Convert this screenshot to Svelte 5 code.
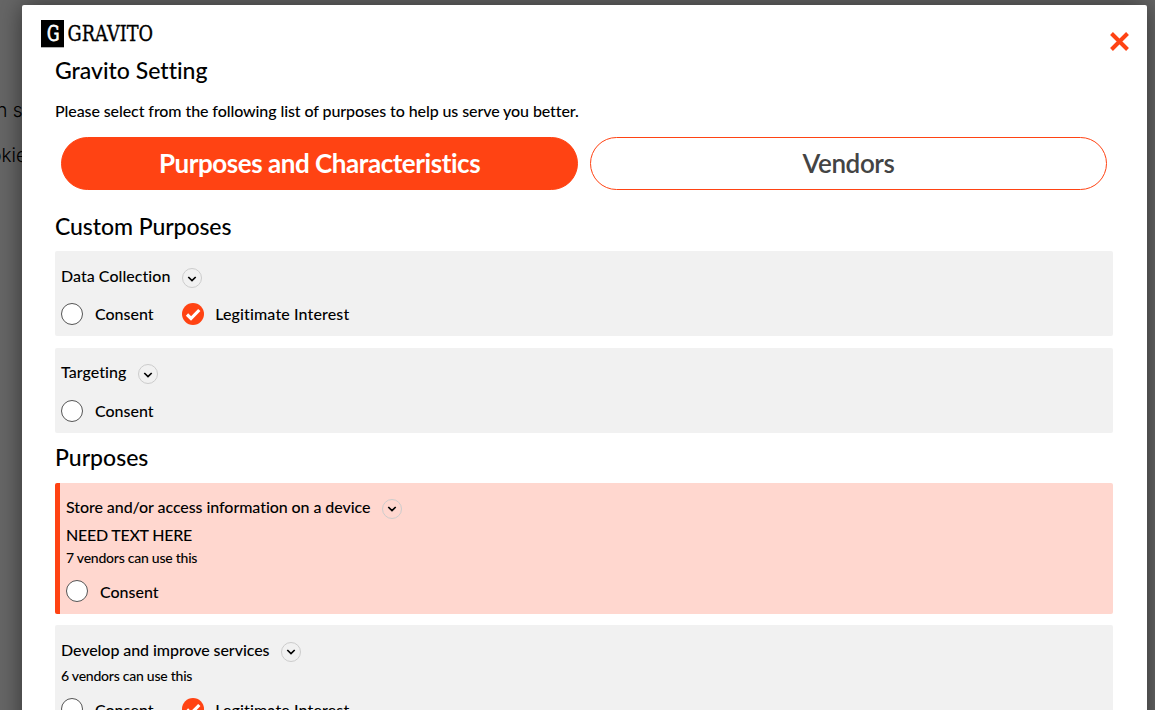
<script>
  const sections = [
    {
      title: 'Custom Purposes',
      items: [
        { name: 'Data Collection', legitimate: true },
        { name: 'Targeting' }
      ]
    },
    {
      title: 'Purposes',
      items: [
        {
          name: 'Store and/or access information on a device',
          note: 'NEED TEXT HERE',
          vendors: 7,
          highlighted: true
        },
        { name: 'Develop and improve services', vendors: 6, legitimate: true }
      ]
    }
  ];
</script>

<div class="page">
  <div class="behind">
    <p class="first">n s</p>
    <p>okie</p>
  </div>
  <main class="dialog">
    <header>
      <svg class="logo" width="114" height="28" viewBox="0 0 114 28" aria-label="Gravito">
        <rect width="23" height="27.3" fill="#000" />
        <text x="6" y="21.3" font-size="22" textLength="12.5" lengthAdjust="spacingAndGlyphs" fill="#fff" stroke="#fff" stroke-width=".8">G</text>
        <text x="26.5" y="21.2" font-size="23" textLength="85.5" lengthAdjust="spacingAndGlyphs" stroke="#000" stroke-width=".4">GRAVITO</text>
      </svg>
      <button class="close" aria-label="Close">
        <svg width="20" height="20" viewBox="0 0 20 20"><path d="M2.5 1.5 18.5 17.5M18.5 1.5 2.5 17.5" stroke="#ff4313" stroke-width="4" /></svg>
      </button>
    </header>
    <div class="content">
      <h1>Gravito Setting</h1>
      <p class="intro">Please select from the following list of purposes to help us serve you better.</p>
      <nav>
        <button class="tab active">Purposes and Characteristics</button>
        <button class="tab">Vendors</button>
      </nav>
      {#each sections as section}
        <section>
          <h2>{section.title}</h2>
          {#each section.items as item}
            <article class:highlighted={item.highlighted}>
              <div class="name">
                <span>{item.name}</span>
                <button class="expand" aria-label="Expand">
                  <svg width="10" height="6" viewBox="0 0 10 6"><path d="M1.3 1 5 4.5 8.7 1" fill="none" stroke="#000" stroke-width="1.7" /></svg>
                </button>
              </div>
              {#if item.note}<p class="note">{item.note}</p>{/if}
              {#if item.vendors}<p class="vendors">{item.vendors} vendors can use this</p>{/if}
              <div class="options">
                <div class="option"><i class="circle"></i><span>Consent</span></div>
                {#if item.legitimate}
                  <div class="option legitimate">
                    <i class="circle checked">
                      <svg width="22" height="22" viewBox="0 0 22 22"><path d="m5 11.5 4 4L17.3 7" fill="none" stroke="#fff" stroke-width="3.2" /></svg>
                    </i>
                    <span>Legitimate Interest</span>
                  </div>
                {/if}
              </div>
            </article>
          {/each}
        </section>
      {/each}
    </div>
  </main>
</div>

<style>
  :global(body) { margin: 0; overflow: hidden; }
  .page { position: relative; box-sizing: border-box; height: 710px; overflow: hidden; background: #666; padding: 5px 8px 0 22px; font-family: Lato, sans-serif; font-weight: 500; font-variant-ligatures: none; color: #000; }
  .behind { position: absolute; left: 0; top: 97px; width: 24px; font: 300 19px/28px Inter, sans-serif; color: #000; display: flex; flex-direction: column; gap: 17px; align-items: flex-end; white-space: nowrap; }
  .behind p { margin: 0 -3px 0 0; }
  .behind .first { margin: 0; padding-right: 1.5px; }
  .dialog { position: relative; box-sizing: border-box; height: 900px; background: #fff; border-radius: 2px; box-shadow: 0 0 24px rgba(0, 0, 0, .5); padding: 15px 18px 0 19px; }
  header { display: flex; justify-content: space-between; height: 36px; }
  .logo { font-family: "DejaVu Serif", serif; font-weight: 400; overflow: visible; }
  button { font: inherit; letter-spacing: inherit; font-variant-ligatures: none; color: inherit; padding: 0; margin: 0; border: 0; background: none; }
  .close { height: 20px; width: 20px; margin-top: 12px; display: flex; }
  .close svg { overflow: visible; }
  .content { padding: 0 16px 0 14px; }
  h1, h2 { font-size: 23px; line-height: 28px; font-weight: 500; margin: 0; }
  .intro { font-size: 16px; line-height: 20px; letter-spacing: -0.09px; margin: 17px 0 16px; }
  nav { display: grid; grid-template-columns: 1fr 1fr; gap: 12px; padding: 0 6px; margin-bottom: 22px; }
  .tab { box-sizing: border-box; height: 53px; border: 1px solid #ff4313; border-radius: 27px; font-size: 26px; font-weight: 600; letter-spacing: -0.38px; color: #444; padding-bottom: 1px; }
  .tab.active { background: #ff4313; color: #fff; font-weight: 700; letter-spacing: -0.45px; }
  h2 { margin-bottom: 11.2px; letter-spacing: -0.07px; }
  article { box-sizing: border-box; min-height: 84.8px; background: #f1f1f1; border-radius: 2px; padding: 13.3px 6px 8px; margin-bottom: 11.8px; font-size: 16px; line-height: 24px; }
  article:last-child { padding-top: 12.3px; }
  section + section { margin-top: -1.4px; }
  section + section h2 { margin-bottom: 12px; letter-spacing: 0; }
  .highlighted { background: #ffd7cf; border-left: 5px solid #ff4313; min-height: 131px; margin-bottom: 11px; padding-top: 12px; }
  .name { display: flex; gap: 11.7px; height: 24.7px; letter-spacing: 0.04px; }
  article:last-child .name { height: 25.7px; }
  section + section .name, section + section article:last-child .name { height: 25px; letter-spacing: -0.07px; }
  section + section article:last-child { padding-top: 13px; }
  .expand { box-sizing: border-box; width: 20px; height: 20px; border: 1px solid #ccc; border-radius: 50%; margin-top: 4px; display: flex; align-items: center; justify-content: center; padding-top: 1px; }
  .note { margin: 3px 0 0; letter-spacing: -0.25px; }
  .vendors { font-size: 14px; line-height: 20px; letter-spacing: -0.24px; margin: 3px 0 0; }
  .note + .vendors { margin-top: 1px; }
  .options { display: flex; gap: 28px; margin-top: 14px; height: 24px; }
  .vendors + .options { margin-top: 12px; }
  .option { display: flex; gap: 12px; }
  .option span { margin-top: -1px; }
  .legitimate { gap: 11.5px; letter-spacing: 0.13px; }
  .vendors + .options .option span { margin-top: 0; }
  .circle { box-sizing: border-box; width: 22px; height: 22px; border: 1px solid #555; background: #fff; border-radius: 50%; display: block; }
  .checked { border: 0; background: #ff4313; }
  .checked svg { display: block; }
</style>
